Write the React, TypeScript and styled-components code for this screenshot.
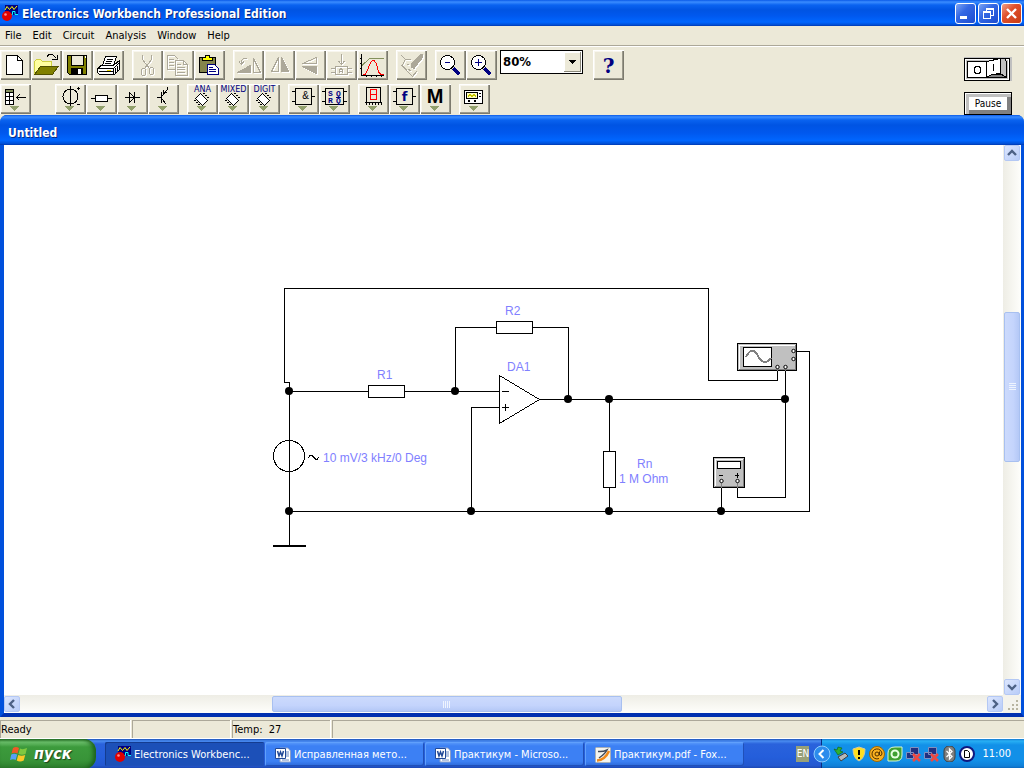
import React from "react";
import styled, { createGlobalStyle, css } from "styled-components";

const uiFont = `"DejaVu Sans Condensed", "DejaVu Sans", sans-serif`;
const schematicFont = `"Liberation Sans", Arial, sans-serif`;

const GlobalStyle = createGlobalStyle`
  *, *::before, *::after { box-sizing: border-box; }
  body { margin: 0; background: #ece9d8; font: 11px/14px ${uiFont}; color: #000; }
  button, select { font: inherit; color: inherit; margin: 0; padding: 0; border: 0; border-radius: 0; background: none; }
  svg { display: block; }
`;

const Desktop = styled.div`
  display: flex;
  flex-direction: column;
  min-height: 100vh;
  overflow: hidden;
`;

/* ---------- main window caption ---------- */

const captionBlue = css`
  background: linear-gradient(#0a5ae8 0, #3a8cff 2px, #0a63f0 5px, #0054e3 10px, #0058ee 60%, #0066ff 85%, #0050d8 95%, #0038b0 100%);
`;

const TitleBar = styled.header`
  ${captionBlue}
  display: flex;
  align-items: center;
  height: 26px;
  padding: 0 2px 0 2px;
  gap: 4px;
`;

const TitleText = styled.h1`
  flex: 1;
  margin: 0;
  padding-top: 1px;
  font: bold 12px/16px ${uiFont};
  color: #fff;
  text-shadow: 1px 1px #0a2a80;
  white-space: nowrap;
`;

const CaptionButtons = styled.div`
  display: flex;
  gap: 2px;
`;

const CaptionButton = styled.button<{ $danger?: boolean }>`
  width: 21px;
  height: 21px;
  border: 1px solid #fff;
  border-radius: 3px;
  background: ${(p) =>
    p.$danger
      ? "linear-gradient(135deg, #f0a088, #e0502c 40%, #c83c14)"
      : "linear-gradient(135deg, #7ca4f4, #3468e4 40%, #1c4cd0)"};
`;

/* ---------- menu and tool bars ---------- */

const MenuBar = styled.nav`
  display: flex;
  height: 20px;
  border-bottom: 1px solid #aca899;
`;

const MenuItem = styled.button`
  height: 19px;
  padding: 1px 6px 0 5px;
`;

const ToolArea = styled.section`
  display: flex;
  justify-content: space-between;
  align-items: flex-start;
  padding: 3px 12px 0 0;
  height: 69px;
  border-top: 1px solid #fff;
`;

const ToolRows = styled.div`
  display: flex;
  flex-direction: column;
  gap: 4px;
`;

const ToolRow = styled.div`
  display: flex;
  gap: 8px;
`;

const ToolGroup = styled.div<{ $after?: number }>`
  display: flex;
  margin-right: ${(p) => p.$after || 0}px;
`;

const ToolButton = styled.button`
  width: 31px;
  height: 30px;
  background: #ece9d8;
  box-shadow: inset 1px 1px #fff, inset -1px -1px #7c7a6e, inset -2px -2px #9c9a8c, inset 2px 2px #f8f6ee;
`;

const ZoomField = styled.label`
  position: relative;
  width: 83px;
  height: 24px;
  margin: 0 2px 0 -5px;
  border: 1px solid #000;
  background: #fff;
`;

const ZoomSelect = styled.select`
  appearance: none;
  width: 100%;
  height: 22px;
  padding-left: 2px;
  font: bold 13px/20px ${uiFont};
`;

const ZoomArrow = styled.svg`
  position: absolute;
  right: 1px;
  top: 1px;
  pointer-events: none;
`;

const RunControls = styled.div`
  display: flex;
  flex-direction: column;
  gap: 11px;
  padding-top: 7px;
`;

const PowerButton = styled.button`
  width: 48px;
  height: 24px;
`;

const PauseButton = styled.button`
  width: 48px;
  height: 23px;
  border: 1px solid #000;
  background: #fff;
  box-shadow: inset 1px 1px #fff, inset 4px 4px #c0c0c0, inset -4px -4px #808080;
  font-size: 10px;
`;

/* ---------- schematic window ---------- */

const ChildWindow = styled.section`
  flex: 1;
  display: flex;
  flex-direction: column;
  border: solid #0050dc;
  border-width: 0 3px 4px 4px;
  border-bottom-color: #0030b0;
  border-radius: 7px 7px 0 0;
  background: #0054e3;
`;

const ChildTitle = styled.h2`
  ${captionBlue}
  margin: 0 -3px 0 -4px;
  height: 30px;
  padding: 3px 8px 0;
  border-radius: 7px 7px 0 0;
  font: bold 12px/30px ${uiFont};
  color: #fff;
  text-shadow: 1px 1px #0a2a80;
`;

const CanvasArea = styled.div`
  flex: 1;
  display: grid;
  grid-template-columns: minmax(0, 1fr) 18px;
  grid-template-rows: minmax(0, 1fr) 18px;
`;

const Canvas = styled.main`
  overflow: hidden;
  min-height: 550px;
  background: #fff;
`;

const ScrollBar = styled.div<{ $vertical?: boolean }>`
  display: flex;
  flex-direction: ${(p) => (p.$vertical ? "column" : "row")};
  padding: ${(p) => (p.$vertical ? "0 1px" : "1px 0")};
  background: ${(p) =>
    p.$vertical ? "linear-gradient(90deg, #eeede5, #fefefb)" : "linear-gradient(#eeede5, #fefefb)"};
`;

const ScrollStep = styled.button`
  width: 16px;
  height: 16px;
  flex: none;
  border: 1px solid #b4c8f4;
  border-radius: 2px;
  background: linear-gradient(135deg, #dce6fe, #b8ccf8);
`;

const TrackGap = styled.div<{ $share: number }>`
  flex: ${(p) => p.$share} 1 0;
`;

const Thumb = styled.div<{ $share: number; $vertical?: boolean }>`
  flex: ${(p) => p.$share} 1 0;
  display: flex;
  align-items: center;
  justify-content: center;
  border: 1px solid #a8c0f0;
  border-radius: 2px;
  background: linear-gradient(${(p) => (p.$vertical ? "90deg" : "180deg")}, #ccdafc, #c4d4fc 60%, #b4c8f6);
`;

const GripCorner = styled.div`
  display: flex;
  align-items: flex-end;
  justify-content: flex-end;
  padding: 2px;
  background: #f4f3ec;
`;

/* ---------- status bar ---------- */

const StatusBar = styled.footer`
  display: flex;
  gap: 2px;
  height: 22px;
  padding-top: 3px;
  border-bottom: 1px solid #fff;
`;

const StatusCell = styled.div<{ $grow?: boolean }>`
  ${(p) => (p.$grow ? "flex: 1;" : "width: 98px;")}
  &:first-child { width: 130px; }
  border: solid #aca899;
  border-width: 1px 0 0 1px;
  box-shadow: 1px 0 #fff;
  padding: 2px 1px 0 0;
  white-space: pre;
`;

/* ---------- task bar ---------- */

const TaskBar = styled.footer`
  display: flex;
  height: 30px;
  background: linear-gradient(#1a50b8 0, #4a8cf0 2px, #2a62dc 5px, #245edb 60%, #2358d0 88%, #1a42a8 100%);
`;

const StartButton = styled.button`
  display: flex;
  align-items: center;
  gap: 5px;
  width: 96px;
  padding-left: 10px;
  border-radius: 0 12px 12px 0;
  background: linear-gradient(#2c7a2c 0, #6cc06c 3px, #3c9a3c 8px, #389438 70%, #2c7c2c 100%);
  box-shadow: inset -3px 0 4px #1c601c;
  color: #fff;
  font: italic bold 16px/20px ${uiFont};
  text-shadow: 1px 1px 1px #1c401c;
`;

const TaskList = styled.div`
  flex: 1;
  display: flex;
  gap: 1px;
  padding: 3px 0 3px 9px;
`;

const TaskButton = styled.button<{ $active?: boolean }>`
  display: flex;
  align-items: center;
  gap: 3px;
  width: 159px;
  padding: 1px 0 0 10px;
  border-radius: 2px;
  color: #fff;
  white-space: nowrap;
  background: ${(p) =>
    p.$active ? "#1c50b8" : "linear-gradient(#5c9cfc 0, #3c80f4 4px, #3c80f4 80%, #2c68d8 100%)"};
  box-shadow: inset 1px 1px ${(p) => (p.$active ? "#143c90" : "#60a0fc")}, inset -1px -1px #2050b8;
`;

const Language = styled.button`
  align-self: center;
  width: 13px;
  height: 16px;
  margin-right: 12px;
  background: #98a078;
  color: #fff;
  font-size: 10px;
  line-height: 16px;
`;

const Tray = styled.div`
  display: flex;
  align-items: center;
  gap: 2px;
  padding-right: 13px;
  border-left: 1px solid #082c80;
  background: linear-gradient(#1478d0 0, #28b0f4 2px, #1290e8 6px, #1290e8 70%, #1080d8 90%, #0c5cb0 100%);
  color: #fff;
`;

const TrayExpand = styled.button`
  width: 18px;
  height: 18px;
  margin-left: -9px;
`;

const Clock = styled.time`
  margin-left: 5px;
`;

/* ---------- icons ---------- */

const G = "#aca899";
const NAVY = "#000080";

const Glyph = ({ children, smooth }: { children: React.ReactNode; smooth?: boolean }) => (
  <svg width="31" height="30" viewBox="0 0 31 30" fill="none" stroke="#000" shapeRendering={smooth ? "auto" : "crispEdges"}>
    {children}
  </svg>
);

const Disabled = ({ children }: { children: React.ReactNode }) => (
  <Glyph>
    <g transform="translate(1 1)" stroke="#fff" color="#fff">{children}</g>
    <g stroke={G} color={G}>{children}</g>
  </Glyph>
);

const Drop = () => <path d="M10 22H19L14.500 27Z" fill="#92a06c" stroke="none" />;

const NewIcon = () => (
  <Glyph>
    <path d="M6.500 5.500H17.500L22.500 10.500V24.500H6.500Z" fill="#fff" />
    <path d="M17.500 5.500V10.500H22.500" />
  </Glyph>
);
const OpenIcon = () => (
  <Glyph>
    <path d="M3.500 24V11.500L5.500 9.500H9.500L11.500 11.500H20.500V16" fill="#ffffa0" stroke="#d0d040" />
    <path d="M3.500 24.500L9.500 16.500H27L21.500 24.500Z" fill="#808000" stroke="#505000" />
    <path d="M16 6.500L18 4.500H21.500L25.500 8.500M26.500 5V9.500H21" />
  </Glyph>
);
const SaveIcon = () => (
  <Glyph>
    <path d="M5.500 5.500H24.500V24.500H7.500L5.500 22.500Z" fill="#808000" />
    <path d="M9.500 5.500H21.500V15.500H9.500Z" fill="#ece9d8" />
    <path d="M9 18H21V24H9Z" fill="#000" stroke="none" />
    <path d="M16 19H19V24H16ZM23 6H24V8H23Z" fill="#fff" stroke="none" />
  </Glyph>
);
const PrintIcon = () => (
  <Glyph>
    <path d="M4.500 18.500L9.500 14.500H21.500L26.500 10.500V19.500L21.500 24.500H6.500L4.500 22.500Z" fill="#fff" />
    <path d="M9.500 15.500L12.500 6.500H23.500L20.500 15.500Z" fill="#fff" />
    <path d="M14 9.500H20M13 11.500H19M12 13.500H18M4.500 18.500H20.500V24.500M20.500 18.500L26.500 12.500M22.500 18V23M24.500 16V21M6 21.500H20" />
    <path d="M14 20.500H18" stroke="#e8d800" />
  </Glyph>
);
const CutIcon = () => (
  <Disabled>
    <path d="M10.500 5V9.500L17.500 18.500M19.500 5V9.500L12.500 18.500" />
    <ellipse cx="11.500" cy="22" rx="2.500" ry="3.500" />
    <ellipse cx="19.500" cy="21" rx="2.500" ry="3.500" />
  </Disabled>
);
const CopyIcon = () => (
  <Disabled>
    <path d="M12 19.500H4.500V5.500H11.500L15.500 9.500M6 9.500H11M6 12.500H11M6 15.500H11" />
    <path d="M12.500 10.500H20.500L24.500 14.500V25.500H12.500ZM20.500 10.500V14.500H24.500M14 14.500H18M14 17.500H22M14 19.500H22M14 22.500H22" />
  </Disabled>
);
const PasteIcon = () => (
  <Glyph>
    <path d="M5.500 7.500H21.500V22.500H5.500Z" fill="#84844c" />
    <path d="M8.500 10.500V7.500H11.500V5.500H15.500V7.500H18.500V10.500Z" fill="#ffff00" />
    <path d="M13.500 14.500H20.500L24.500 18.500V24.500H13.500Z" fill="#fff" stroke={NAVY} />
    <path d="M15 17.500H19M15 19.500H22M15 21.500H22" stroke={NAVY} />
  </Glyph>
);
const RotateIcon = () => (
  <Disabled>
    <path d="M4 22.500H17.500V15.500Z" fill="currentColor" />
    <path d="M20.500 8.500V22.500H27.500ZM14 8.500H10.500L8.500 10.500V14M6 11.500L8.500 14.500L11 11.500" />
  </Disabled>
);
const FlipHIcon = () => (
  <Disabled>
    <path d="M14.500 7.500V21.500H7.500Z" />
    <path d="M17.500 7.500V21.500H24.500Z" fill="currentColor" />
  </Disabled>
);
const FlipVIcon = () => (
  <Disabled>
    <path d="M7.500 13.500H21.500V7.500Z" />
    <path d="M7.500 16.500H21.500V23.500Z" fill="currentColor" />
  </Disabled>
);
const PropsIcon = () => (
  <Disabled>
    <path d="M15.500 4V14M12.500 11L15.500 14.500L18.500 11M9.500 16.500H21.500V24.500H9.500ZM5 18.500H9M5 22.500H9M22 18.500H26M22 22.500H26M13.500 23V20L15 18.500L16.500 20V23M14 21.500H16" />
  </Disabled>
);
const GraphIcon = () => (
  <Glyph>
    <path d="M4.500 4V25.500H27M3 8.500H4M3 13.500H4M3 18.500H4M9.500 26V27M14.500 26V27M19.500 26V27M24.500 26V27" />
    <path d="M5 15.500L12.500 8.500H27" stroke="#84905c" />
    <path d="M6 24.500H8L10.500 20L13.500 12.500L15.500 10.500H17L19.500 13.500L21.500 22L24 24.500H27" stroke="#f00" />
  </Glyph>
);
const PenIcon = () => (
  <Disabled>
    <path d="M5.500 5.500L9.500 9.500L6 15.500L16.500 26.500L20.500 21.500M9.500 9.500H15M11 14H13M12 19L15.500 21.500" />
    <path d="M24.500 4.500L15.500 13.500V17.500L18 18.500L26.500 7.500V4.500Z" fill="currentColor" />
  </Disabled>
);
const LensIcon = ({ plus }: { plus?: boolean }) => (
  <Glyph>
    <path d="M18.500 18.500L24.500 24.500" stroke={NAVY} strokeWidth="3" />
    <circle cx="12.500" cy="12.500" r="7" fill="#fff" />
    <path d={plus ? "M9 12.500H16M12.500 9V16" : "M10 12.500H15"} stroke={NAVY} />
  </Glyph>
);
const HelpIcon = () => (
  <Glyph smooth>
    <text x="15.500" y="23" textAnchor="middle" fontFamily="DejaVu Serif, serif" fontWeight="bold" fontSize="20" fill={NAVY} stroke="none">?</text>
  </Glyph>
);

const PartsIcon = () => (
  <Glyph>
    <path d="M5.500 5.500H13.500V20.500H5.500Z" fill="#fff" />
    <path d="M6 6H13V8H6Z" fill="#84905c" stroke="none" />
    <path d="M5 8.500H14M5 12.500H14M5 16.500H14M9.500 8V21M16 13.500H26M19.500 10.500L16.500 13.500L19.500 16.500" />
    <Drop />
  </Glyph>
);
const SourceIcon = () => (
  <Glyph>
    <circle cx="15.500" cy="12.500" r="7.500" />
    <path d="M15.500 2V22M22 4.500H25M23.500 3V6M22 20.500H25" />
    <Drop />
  </Glyph>
);
const BasicIcon = () => (
  <Glyph>
    <path d="M5 14.500H9M22 14.500H26" />
    <path d="M9.500 11.500H21.500V17.500H9.500Z" fill="#fff" />
    <Drop />
  </Glyph>
);
const DiodeIcon = () => (
  <Glyph>
    <path d="M8 13.500H23M12.500 8.500V18.500L17.500 13.500ZM17.500 8V19" />
    <Drop />
  </Glyph>
);
const TransistorIcon = () => (
  <Glyph>
    <path d="M9 13.500H13M13.500 8V19M13.500 12.500L19.500 5.500M13.500 14.500L18.500 20.500M15.500 5.500V8.500H19M19.500 3V6" />
    <Drop />
  </Glyph>
);
const ChipIcon = ({ label }: { label: string }) => (
  <Glyph>
    <text x="15.500" y="8" textAnchor="middle" fontFamily="DejaVu Sans, sans-serif" fontSize="8" fill={NAVY} stroke="none">{label}</text>
    <path d="M13.500 9.500L20.500 16.500L15.500 21.500L8.500 14.500Z" fill="#fff" />
    <path d="M16 9.500H18M18 11.500H20M20 13.500H22M7 16.500H9M9 18.500H11M11 20.500H13" />
    <Drop />
  </Glyph>
);
const GateIcon = () => (
  <Glyph>
    <path d="M4 7.500H7M4 17.500H7M24 12.500H27" />
    <path d="M7.500 4.500H23.500V20.500H7.500Z" fill="#ece9d8" />
    <text x="17.500" y="15" textAnchor="middle" fontFamily="Liberation Sans, sans-serif" fontSize="10" fill="#000" stroke="none">&amp;</text>
    <Drop />
  </Glyph>
);
const FlipFlopIcon = () => (
  <Glyph>
    <path d="M3 7.500H6M3 17.500H6M25 7.500H28M25 17.500H28" />
    <path d="M6.500 4.500H24.500V20.500H6.500Z" fill="#ece9d8" />
    <g fontFamily="Liberation Mono, monospace" fontWeight="bold" fontSize="8" fill={NAVY} stroke="none">
      <text x="9" y="12">S</text><text x="17" y="12">Q</text>
      <text x="9" y="19">R</text><text x="17" y="19">Q</text>
    </g>
    <path d="M17 13.500H22" stroke={NAVY} />
    <Drop />
  </Glyph>
);
const DisplayIcon = () => (
  <Glyph>
    <path d="M8.500 3.500H22.500V18.500H8.500Z" fill="#ece9d8" />
    <path d="M12.500 5.500H18.500V15.500H12.500ZM12.500 10.500H18.500" stroke="#f00" />
    <path d="M7 18.500H24M8.500 19V21M11.500 19V21M14.500 19V21M17.500 19V21M20.500 19V21M23.500 19V21" />
    <Drop />
  </Glyph>
);
const FunctionIcon = () => (
  <Glyph>
    <path d="M4 7.500H7M4 17.500H7M24 12.500H27" />
    <path d="M7.500 4.500H23.500V20.500H7.500Z" fill="#ece9d8" />
    <text x="15.500" y="17" textAnchor="middle" fontFamily="DejaVu Sans, sans-serif" fontWeight="bold" fontSize="13" fill={NAVY} stroke="none">f</text>
    <Drop />
  </Glyph>
);
const MiscIcon = () => (
  <Glyph>
    <text x="15" y="19" textAnchor="middle" fontFamily="Liberation Sans, sans-serif" fontWeight="bold" fontSize="20" fill="#000" stroke="none">M</text>
    <Drop />
  </Glyph>
);
const InstrumentIcon = () => (
  <Glyph>
    <path d="M5.500 6.500H23.500V19.500H5.500Z" fill="#fff" />
    <path d="M7.500 8.500H18.500V14.500H7.500Z" fill="#ffffc0" />
    <path d="M9 12.500L11 10.500L13 12.500L15 10.500L17 12.500" stroke="#c8c800" />
    <path d="M21 9V10M21 12V13M9 17H11M15 17H17" strokeWidth="2" />
    <Drop />
  </Glyph>
);

const AppLogo = () => (
  <svg width="16" height="17" viewBox="0 0 16 17" fill="none">
    <path d="M3 0H16V10H3Z" fill="#000080" />
    <path d="M3 5L5 1.500L7.500 4.500L10 1.500L12 4.500L15 1" stroke="#ffff00" />
    <path d="M9 9.500H10.500V6.500H13V9.500H16" stroke="#00ffff" />
    <circle cx="5" cy="11" r="5" fill="#e00000" />
    <circle cx="3.500" cy="9.500" r="1.300" fill="#ff9090" />
  </svg>
);
const WordLogo = () => (
  <svg width="16" height="16" viewBox="0 0 16 16">
    <path d="M5 1H13L15.500 4V15H5Z" fill="#fff" stroke="#8ca0c8" />
    <path d="M11 5H14M11 7H14M11 9H14M7 13H14" stroke="#6888c0" />
    <path d="M.5 1.500H10.500V11.500H.5Z" fill="#fff" stroke="#204898" />
    <path d="M2.500 4L4 9L5.500 5L7 9L8.500 4" fill="none" stroke="#204898" strokeWidth="1.500" />
  </svg>
);
const FoxitLogo = () => (
  <svg width="16" height="16" viewBox="0 0 16 16" fill="none">
    <rect x=".5" y=".5" width="15" height="15" rx="1" fill="#f4f4ee" stroke="#a8b0b8" />
    <path d="M3 4.500Q8 5 12 3Q10 7 4 11" stroke="#404858" strokeWidth="1.500" />
    <path d="M2 13.500Q10 13 14 4" stroke="#f08818" strokeWidth="2.500" />
  </svg>
);
const WindowsFlag = () => (
  <svg width="19" height="18" viewBox="0 0 19 18">
    <path d="M3 3Q6 1 9 3L7.500 8.500Q4.500 7 1.500 8.500Z" fill="#f05828" />
    <path d="M10 3.500Q13 5 17 3L15.500 9Q12 10.500 8.500 9Z" fill="#80c840" />
    <path d="M1.300 9.500Q4 8 7.200 9.500L5.700 15Q3 13.500 0 15Z" fill="#58a0f8" />
    <path d="M8.200 10Q11.500 11.500 15.200 10L13.700 15.500Q10 17.500 6.700 15.500Z" fill="#fcc828" />
  </svg>
);

type Dir = "up" | "down" | "left" | "right";
const chevrons: Record<Dir, string> = {
  up: "M3 9L7 5L11 9",
  down: "M3 5L7 9L11 5",
  left: "M9 3L5 7L9 11",
  right: "M5 3L9 7L5 11",
};
const Step = ({ dir }: { dir: Dir }) => (
  <ScrollStep aria-label={`Scroll ${dir}`}>
    <svg width="14" height="14" viewBox="0 0 14 14" fill="none" stroke="#4d6185" strokeWidth="2.400">
      <path d={chevrons[dir]} />
    </svg>
  </ScrollStep>
);

const trayIcons: { name: string; art: React.ReactNode }[] = [
  {
    name: "Safely remove hardware",
    art: (
      <>
        <path d="M5 11L12 7L15 10L8 15Z" fill="#b8b8b8" stroke="#404040" />
        <path d="M1 3L5 9L10 6L7 5L9 2L5 1L4 4Z" fill="#30b030" stroke="#106010" strokeWidth=".6" />
      </>
    ),
  },
  {
    name: "Security alert",
    art: (
      <>
        <path d="M8 1L14 3Q14 12 8 15Q2 12 2 3Z" fill="#ffe020" stroke="#d0c8a0" />
        <path d="M8 4V9M8 11V13" stroke="#000" strokeWidth="2" />
      </>
    ),
  },
  {
    name: "Mail agent",
    art: (
      <>
        <circle cx="8" cy="8" r="7.500" fill="#f8b020" stroke="#a06800" />
        <circle cx="8" cy="8" r="2" fill="none" stroke="#503000" />
        <path d="M10.500 5.500V9Q12 11 13 8A5 5 0 1 0 10 12.500" fill="none" stroke="#503000" />
      </>
    ),
  },
  {
    name: "Antivirus",
    art: (
      <>
        <path d="M1 15V7Q1 1 8 1H15V9Q15 15 9 15Z" fill="#40a030" stroke="#d8f8d0" />
        <circle cx="8" cy="8" r="4.500" fill="#e8ffe0" />
        <circle cx="8" cy="8" r="2.500" fill="#40a030" />
      </>
    ),
  },
  ...["Local network", "Wireless network"].map((name) => ({
    name,
    art: (
      <>
        <path d="M5.500 1.500H13.500V8.500H5.500ZM1.500 6.500H8.500V12.500H1.500Z" fill="#203080" stroke="#8090c0" />
        <path d="M8 8L15 15M15 8L8 15" stroke="#f04840" strokeWidth="2.500" />
      </>
    ),
  })),
  {
    name: "Bluetooth",
    art: (
      <>
        <rect x="3" y="0" width="11" height="16" rx="5" fill="#808080" stroke="#404040" />
        <path d="M5.500 5L11 10.500L8.500 13V3L11 5.500L5.500 11" fill="none" stroke="#fff" strokeWidth="1.300" />
      </>
    ),
  },
  {
    name: "Document monitor",
    art: (
      <>
        <circle cx="8" cy="8" r="7" fill="#fff" stroke="#101880" strokeWidth="2" />
        <path d="M5.500 4.500H8.500L10.500 6.500V11.500H5.500Z" fill="#fff" stroke="#000" />
      </>
    ),
  },
];

/* ---------- schematic ---------- */

const Label = styled.text`
  font: 12px ${schematicFont};
  fill: #8080ff;
  stroke: none;
`;

const junctions = [
  [289, 391], [455, 391], [568, 399], [609, 399], [785, 399],
  [289, 511], [471, 511], [609, 511], [721, 511],
];

const terminals = [
  [793, 351], [793, 359], [777, 367], [785, 367], [721, 481], [737, 481],
];

const Schematic = () => (
  <svg width="999" height="550" viewBox="4 145 999 550" fill="none" stroke="#000" shapeRendering="crispEdges" role="img" aria-label="Inverting amplifier circuit">
    <path d="M289.500 546V382.500H284.500V288.500H708.500V380.500H777.500V368" />
    <path d="M289 391.500H499M455.500 391V327.500H568.500V399M540 399.500H785M499 407.500H471.500V511" />
    <path d="M289 511.500H809.500V351.500H794M609.500 399V511M721.500 482V511M737.500 482V497.500H785.500V368" />
    <path d="M273 546H306" strokeWidth="2" />
    <circle cx="289" cy="456" r="15.500" />
    <path d="M308 458L310 455.500H312L316 459.500H317L319 457" />
    <g fill="#fff">
      <rect x="368.500" y="385.500" width="36" height="12" />
      <rect x="496.500" y="321.500" width="36" height="12" />
      <rect x="603.500" y="451.500" width="12" height="36" />
      <path d="M499.500 375.500V423.500L539.500 399.500Z" />
    </g>
    <path d="M289.500 440V472M502 391.500H509M502 407.500H509M505.500 404V411" />
    <g fill="#000" stroke="none" shapeRendering="auto">
      {junctions.map(([x, y]) => (
        <circle key={`${x}-${y}`} cx={x} cy={y} r="4" />
      ))}
    </g>

    <rect x="737.500" y="343.500" width="59" height="27" fill="#c0c0c0" />
    <path d="M739 369V345H795" stroke="#fff" />
    <path d="M739 369.500H795.500V345" stroke="#808080" />
    <rect x="743.500" y="347.500" width="28" height="19" fill="#fff" />
    <path d="M746 357Q752 345 758 356T771 358" stroke="#808080" strokeWidth="2" />

    <rect x="713.500" y="457.500" width="31" height="30" fill="#c0c0c0" />
    <path d="M715 486V459H743" stroke="#fff" />
    <path d="M715 486.500H743.500V459" stroke="#808080" />
    <rect x="717.500" y="461.500" width="23" height="7" fill="#fff" />
    <path d="M719 475.500H723M735 475.500H739M737.500 473V478" />
    <path d="M721.500 482V488M737.500 482V488M777.500 368V371M785.500 368V371" stroke="#808080" />

    <g fill="#fff" shapeRendering="auto">
      {terminals.map(([x, y]) => (
        <circle key={`${x}-${y}`} cx={x + 0.5} cy={y} r="1.700" />
      ))}
    </g>

    <Label x="377" y="379">R1</Label>
    <Label x="505" y="315">R2</Label>
    <Label x="507" y="371">DA1</Label>
    <Label x="323" y="462">10 mV/3 kHz/0 Deg</Label>
    <Label x="637" y="468">Rn</Label>
    <Label x="619" y="483">1 M Ohm</Label>
  </svg>
);

/* ---------- page ---------- */

type Tool = [string, React.ReactNode];
const Tools = ({ items, after }: { items: Tool[]; after?: number }) => (
  <ToolGroup $after={after}>
    {items.map(([name, icon]) => (
      <ToolButton key={name} aria-label={name}>{icon}</ToolButton>
    ))}
  </ToolGroup>
);

export default function App() {
  return (
    <Desktop>
      <GlobalStyle />
      <TitleBar>
        <AppLogo />
        <TitleText>Electronics Workbench Professional Edition</TitleText>
        <CaptionButtons>
          <CaptionButton aria-label="Minimize">
            <svg width="19" height="19"><path d="M4 12H11V15H4Z" fill="#fff" /></svg>
          </CaptionButton>
          <CaptionButton aria-label="Restore">
            <svg width="19" height="19" fill="none" stroke="#fff" shapeRendering="crispEdges">
              <path d="M7 7V4.500H14.500V11.500H12M7 5.500H14M4.500 7.500H11.500V14.500H4.500ZM5 8.500H11" />
            </svg>
          </CaptionButton>
          <CaptionButton $danger aria-label="Close">
            <svg width="19" height="19" stroke="#fff" strokeWidth="2.400"><path d="M5 5L14 14M14 5L5 14" /></svg>
          </CaptionButton>
        </CaptionButtons>
      </TitleBar>

      <MenuBar>
        {["File", "Edit", "Circuit", "Analysis", "Window", "Help"].map((m) => (
          <MenuItem key={m}>{m}</MenuItem>
        ))}
      </MenuBar>

      <ToolArea>
        <ToolRows>
          <ToolRow>
            <Tools items={[["New", <NewIcon />], ["Open", <OpenIcon />], ["Save", <SaveIcon />], ["Print", <PrintIcon />]]} />
            <Tools items={[["Cut", <CutIcon />], ["Copy", <CopyIcon />], ["Paste", <PasteIcon />]]} />
            <Tools
              items={[
                ["Rotate", <RotateIcon />],
                ["Flip horizontal", <FlipHIcon />],
                ["Flip vertical", <FlipVIcon />],
                ["Component properties", <PropsIcon />],
                ["Display graphs", <GraphIcon />],
              ]}
            />
            <Tools items={[["Create subcircuit", <PenIcon />]]} />
            <Tools items={[["Zoom out", <LensIcon />], ["Zoom in", <LensIcon plus />]]} />
            <ZoomField>
              <ZoomSelect aria-label="Zoom" defaultValue="80%">
                <option>50%</option>
                <option>80%</option>
                <option>100%</option>
              </ZoomSelect>
              <ZoomArrow width="17" height="20" viewBox="0 0 17 20" shapeRendering="crispEdges">
                <path d="M0 0H17V20H0Z" fill="#ece9d8" />
                <path d="M.5 20V.5H17" fill="none" stroke="#fff" />
                <path d="M0 19.500H16.500V0" fill="none" stroke="#8a887a" />
                <path d="M5 8H12L8.500 12Z" />
              </ZoomArrow>
            </ZoomField>
            <Tools items={[["Help", <HelpIcon />]]} />
          </ToolRow>
          <ToolRow>
            <Tools after={16} items={[["Favorites", <PartsIcon />]]} />
            <Tools
              items={[
                ["Sources", <SourceIcon />],
                ["Basic", <BasicIcon />],
                ["Diodes", <DiodeIcon />],
                ["Transistors", <TransistorIcon />],
              ]}
            />
            <Tools
              items={[
                ["Analog ICs", <ChipIcon label="ANA" />],
                ["Mixed ICs", <ChipIcon label="MIXED" />],
                ["Digital ICs", <ChipIcon label="DIGIT" />],
              ]}
            />
            <Tools items={[["Logic gates", <GateIcon />], ["Digital", <FlipFlopIcon />]]} />
            <Tools items={[["Indicators", <DisplayIcon />], ["Controls", <FunctionIcon />], ["Miscellaneous", <MiscIcon />]]} />
            <Tools items={[["Instruments", <InstrumentIcon />]]} />
          </ToolRow>
        </ToolRows>
        <RunControls>
          <PowerButton aria-label="Activate simulation">
            <svg width="48" height="24" viewBox="0 0 48 24" shapeRendering="crispEdges" fill="none" stroke="#000">
              <path d="M0 0H48V24H0Z" fill="#c0c0c0" stroke="none" />
              <path d="M.5 1.500H45.500V23.500H.5Z" fill="#c0c0c0" />
              <path d="M1.500 2.500H44.500V22.500H1.500Z" stroke="#fff" />
              <path d="M3.500 4.500H22.500V20.500H3.500Z" fill="#fff" />
              <path d="M22.500 20.500L26 17H37L42.500 20.500Z" fill="#808080" />
              <path d="M22.500 4.500L36.500 1.500V16.500L28 17.500L22.500 20.500Z" fill="#fff" />
              <path d="M36.500 1.500H40.500L42.500 4.500V20.500L36.500 16.500Z" fill="#c0c0c0" />
              <circle cx="13.500" cy="13" r="3.500" />
              <path d="M29.500 7V14" />
            </svg>
          </PowerButton>
          <PauseButton>Pause</PauseButton>
        </RunControls>
      </ToolArea>

      <ChildWindow>
        <ChildTitle>Untitled</ChildTitle>
        <CanvasArea>
          <Canvas>
            <Schematic />
          </Canvas>
          <ScrollBar $vertical>
            <Step dir="up" />
            <TrackGap $share={152} />
            <Thumb $vertical $share={148}>
              <svg width="7" height="8" stroke="#eef4fe" shapeRendering="crispEdges"><path d="M0 .5H7M0 2.500H7M0 4.500H7M0 6.500H7" /></svg>
            </Thumb>
            <TrackGap $share={218} />
            <Step dir="down" />
          </ScrollBar>
          <ScrollBar>
            <Step dir="left" />
            <TrackGap $share={253} />
            <Thumb $share={348}>
              <svg width="8" height="7" stroke="#eef4fe" shapeRendering="crispEdges"><path d="M.5 0V7M2.500 0V7M4.500 0V7M6.500 0V7" /></svg>
            </Thumb>
            <TrackGap $share={366} />
            <Step dir="right" />
          </ScrollBar>
          <GripCorner>
            <svg width="12" height="12" fill="#b8b4a0" shapeRendering="crispEdges">
              <path d="M9 1H11V3H9ZM5 5H7V7H5ZM9 5H11V7H9ZM1 9H3V11H1ZM5 9H7V11H5ZM9 9H11V11H9Z" />
            </svg>
          </GripCorner>
        </CanvasArea>
      </ChildWindow>

      <StatusBar>
        <StatusCell>Ready</StatusCell>
        <StatusCell />
        <StatusCell>{"Temp:  27"}</StatusCell>
        <StatusCell $grow />
      </StatusBar>

      <TaskBar>
        <StartButton>
          <WindowsFlag />
          пуск
        </StartButton>
        <TaskList>
          <TaskButton $active><AppLogo />Electronics Workbenc...</TaskButton>
          <TaskButton><WordLogo />Исправленная мето...</TaskButton>
          <TaskButton><WordLogo />Практикум - Microso...</TaskButton>
          <TaskButton><FoxitLogo />Практикум.pdf - Fox...</TaskButton>
        </TaskList>
        <Language>EN</Language>
        <Tray>
          <TrayExpand aria-label="Show hidden icons">
            <svg width="18" height="18" viewBox="0 0 18 18" fill="none" stroke="#fff">
              <circle cx="9" cy="9" r="8" fill="#2c8cec" stroke="#90ccfc" />
              <path d="M10.500 5L6.500 9L10.500 13" strokeWidth="2" />
            </svg>
          </TrayExpand>
          {trayIcons.map((t) => (
            <svg key={t.name} width="16" height="16" viewBox="0 0 16 16" role="img" aria-label={t.name}>{t.art}</svg>
          ))}
          <Clock>11:00</Clock>
        </Tray>
      </TaskBar>
    </Desktop>
  );
}
